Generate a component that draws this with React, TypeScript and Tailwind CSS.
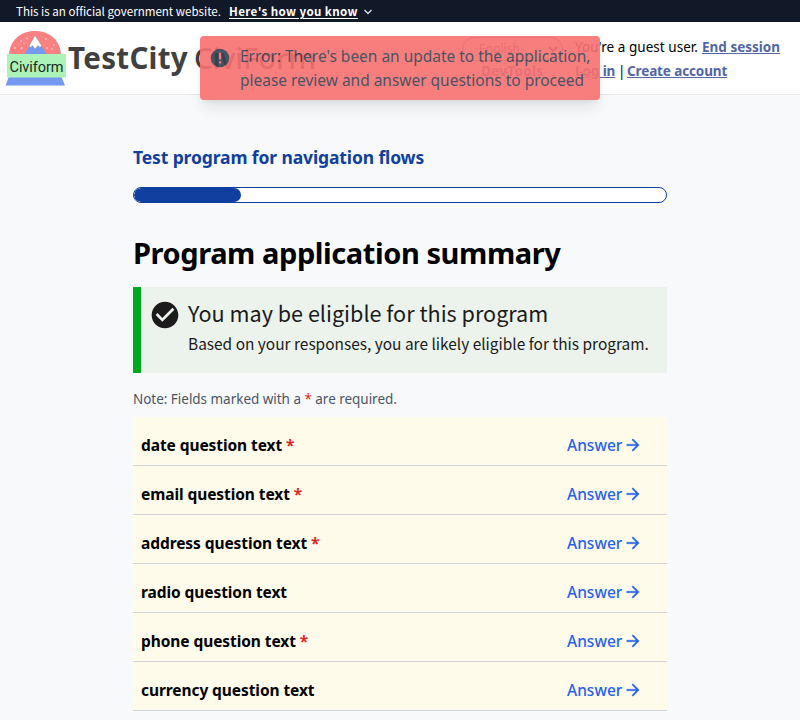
import React from "react";

const sans = "font-['Noto_Sans','Open_Sans',sans-serif]";
const source = "font-['Noto_Sans_CJK_SC',sans-serif]";

const questions: { text: string; required: boolean }[] = [
  { text: "date question text", required: true },
  { text: "email question text", required: true },
  { text: "address question text", required: true },
  { text: "radio question text", required: false },
  { text: "phone question text", required: true },
  { text: "currency question text", required: false },
];

function Logo() {
  return (
    <svg width="60" height="56" viewBox="0 0 60 56" className="block overflow-visible" aria-label="Civiform logo">
      <path d="M3 26C3 11 14 1 29 1s26 10 26 25z" fill="#fa8182" />
      <path d="M18 25L29 6l12 19z" fill="#7598f0" />
      <path d="M29 5.500l-6 10.500 1.500 1.500 2-2 2.500 3.500 3-3.500 2 2 1.500-2z" fill="#fff" stroke="#888" strokeWidth=".4" />
      <g fill="#ffdcdc">
        <circle cx="15" cy="11" r=".8" />
        <circle cx="21" cy="8.500" r=".8" />
        <circle cx="15.500" cy="18" r=".8" />
        <circle cx="9" cy="18" r=".8" />
        <circle cx="18" cy="13" r=".6" />
        <circle cx="40" cy="9" r=".8" />
        <circle cx="41" cy="18" r=".8" />
        <circle cx="48" cy="15" r=".8" />
        <circle cx="46" cy="19" r=".7" />
      </g>
      <path d="M3 46h52l4 9.500H-.300z" fill="#7598f0" />
      <path d="M1 24h59v23.500H1z" fill="#abf3b8" />
      <text x="3.500" y="41.500" fontSize="14.5" textLength="54" fontFamily="Roboto, sans-serif" fill="#1e2b22">Civiform</text>
    </svg>
  );
}

function Banner() {
  return (
    <div className={`flex h-[22px] items-center bg-[#111827] px-4 pt-px text-[11.6px] text-white ${source}`}>
      <span className="w-[213px] whitespace-nowrap tracking-[-0.02px]">This is an official government website.</span>
      <span className="whitespace-nowrap font-bold tracking-[0.38px] underline underline-offset-2">Here's how you know</span>
      <svg className="ml-1.5" width="8" height="6" viewBox="0 0 8 6" fill="none" stroke="#d8dadf" strokeWidth="1.4">
        <path d="M.5 1L4 4.500 7.500 1" />
      </svg>
    </div>
  );
}

function Header() {
  return (
    <header className="flex h-[73px] border-b border-gray-200 bg-white">
      <div className="flex w-[454px] pl-1.5 pt-2">
        <Logo />
        <span className="ml-0.5 mt-2 whitespace-nowrap text-[29.5px] leading-10 font-bold tracking-[0.3px] text-[#404040]">
          TestCity<span className="ml-[6px] font-medium tracking-[-0.3px]">CiviForm</span>
        </span>
      </div>
      <div className="w-[121px] pl-2 pt-[15px]">
        <div className="flex h-6 w-[101px] items-center justify-between rounded-full border border-[#6b7280] pl-4 pr-1 text-xs text-[#4b5563]">
          <span>English</span>
          <svg width="10" height="7" viewBox="0 0 10 7" fill="none" stroke="#374151" strokeWidth="2">
            <path d="M1 1l4 4 4-4" />
          </svg>
        </div>
        <div className="pl-[19px] text-[13.5px] leading-5 font-bold tracking-[0.3px] text-[#5265a5]">DevTools</div>
      </div>
      <div className="whitespace-nowrap pt-[13px] text-[13.5px] leading-6 text-black">
        <div className="flex">
          <span className="w-[127px] tracking-[0.04px]">You're a guest user.</span>
          <a className="font-bold text-[#5265a5] underline">End session</a>
        </div>
        <div className="flex">
          <a className="w-[43px] font-bold tracking-[-0.1px] text-[#5265a5] underline">Log in</a>
          <span className="w-[9px]">|</span>
          <a className="font-bold tracking-[-0.12px] text-[#5265a5] underline">Create account</a>
        </div>
      </div>
    </header>
  );
}

function Toast() {
  return (
    <div className="absolute left-[200px] top-9 flex h-16 w-[400px] rounded-sm bg-[#f87171] pt-2 text-[#374151] opacity-90 shadow-lg">
      <svg className="ml-2.5 mt-1 shrink-0" width="20" height="20" viewBox="0 0 20 20">
        <circle cx="10" cy="10" r="9.300" fill="currentColor" />
        <rect x="9" y="4.500" width="2.200" height="7" rx="1" fill="#f87171" />
        <rect x="9" y="13.200" width="2.200" height="2.200" rx=".7" fill="#f87171" />
      </svg>
      <div className="ml-2.5 whitespace-nowrap text-[15.5px] leading-6 tracking-[-0.02px]">
        <div>Error: There's been an update to the application,</div>
        <div>please review and answer questions to proceed</div>
      </div>
    </div>
  );
}

function EligibilityAlert() {
  return (
    <section className={`mt-4 flex h-[86px] border-l-8 border-[#00a91c] bg-[#ecf3ec] text-[#1b1b1b] ${source}`}>
      <svg className="ml-2 mt-3 shrink-0" width="32" height="32" viewBox="0 0 24 24" fill="currentColor">
        <path d="M12 2C6.480 2 2 6.480 2 12s4.480 10 10 10 10-4.480 10-10S17.520 2 12 2zm-2 15-5-5 1.410-1.410L10 14.170l7.590-7.590L19 8l-9 9z" />
      </svg>
      <div className="ml-[7px] whitespace-nowrap pt-[11px]">
        <h3 className="text-[21.6px] leading-[30px]">You may be eligible for this program</h3>
        <p className="text-[15.45px] leading-[30px]">Based on your responses, you are likely eligible for this program.</p>
      </div>
    </section>
  );
}

function QuestionRow({ text, required }: { text: string; required: boolean }) {
  return (
    <div className="flex h-[49px] items-end justify-between border-b border-[#d1d5db] bg-[#fffbeb] pb-2 pl-2 pr-[27px] text-[15.5px] leading-6">
      <span className="whitespace-nowrap font-bold tracking-[-0.08px] text-black">
        {text}
        {required && <span className="text-[#dc2626]"> *</span>}
      </span>
      <a className="flex w-[73px] items-center justify-between font-medium text-[#2563eb]">
        Answer
        <svg width="14" height="14" viewBox="3 3 18 18" fill="currentColor" stroke="currentColor" strokeWidth=".5" className="shrink-0">
          <path d="M12 4l-1.410 1.410L16.170 11H4v2h12.170l-5.580 5.590L12 20l8-8z" />
        </svg>
      </a>
    </div>
  );
}

export default function App() {
  return (
    <div className={`relative h-[720px] w-[800px] overflow-hidden bg-[#f8f9fb] ${sans}`}>
      <Banner />
      <Header />
      <main className="ml-[133px] w-[534px] pt-12">
        <h2 className="whitespace-nowrap text-[17.5px] leading-7 font-bold tracking-[-0.12px] text-[#113f9f]">
          Test program for navigation flows
        </h2>
        <div className="mt-4 h-4 overflow-hidden rounded-full border border-[#113f9f] bg-white">
          <div className="h-full w-[107px] rounded-full bg-[#113f9f]" />
        </div>
        <h1 className="mt-8 whitespace-nowrap text-[29px] leading-9 font-bold tracking-[-0.42px] text-black">
          Program application summary
        </h1>
        <EligibilityAlert />
        <p className="mt-4 whitespace-nowrap text-[13.5px] leading-5 tracking-[-0.03px] text-[#4b5563]">
          Note: Fields marked with a <span className="text-[#dc2626]">*</span> are required.
        </p>
        <div className="mt-2">
          {questions.map((q) => (
            <QuestionRow key={q.text} {...q} />
          ))}
        </div>
      </main>
      <Toast />
    </div>
  );
}
